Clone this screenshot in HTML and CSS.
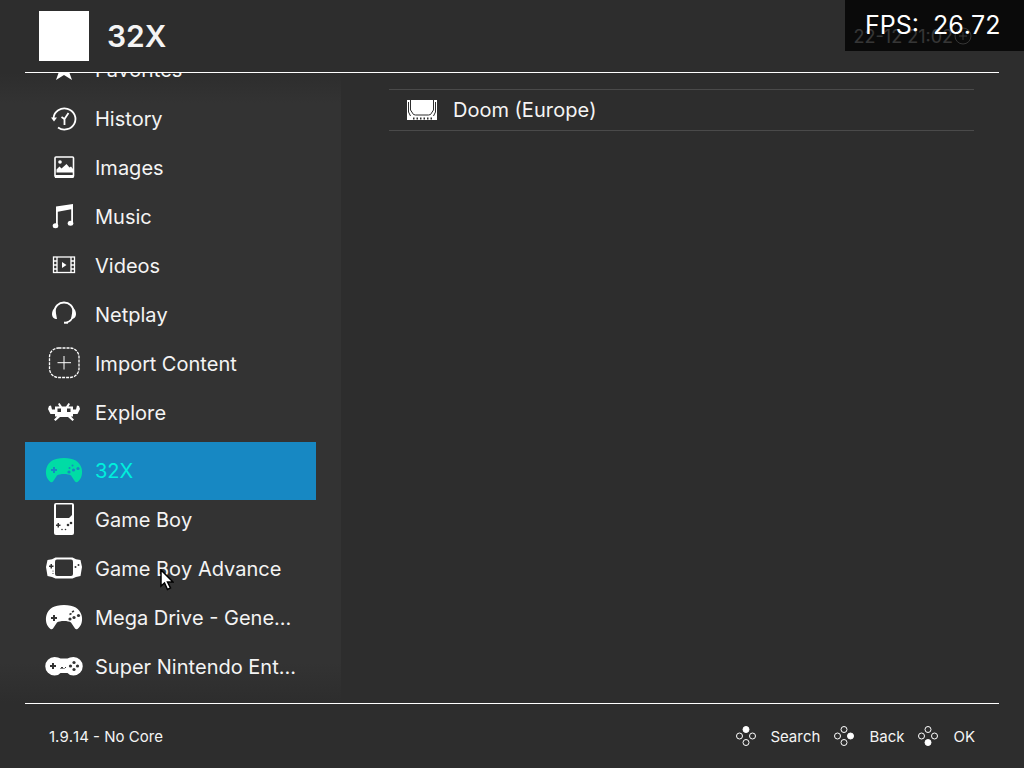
FILE: index.html
```html
<!DOCTYPE html>
<html lang="en">
<head>
  <meta charset="UTF-8">
  <meta name="viewport" content="width=device-width, initial-scale=1.0">
  <title>32X</title>
  <link rel="stylesheet" href="styles.css">
</head>
<body>
  <header class="header">
    <div class="thumb"></div>
    <h1>32X</h1>
    <div class="clock">
      <span>22-12 21:02</span>
      <svg width="20" height="20" viewBox="0 0 20 20" fill="none" stroke="currentColor"><circle cx="10" cy="10" r="8"/><path d="M10 6v8M6 10h8"/></svg>
    </div>
  </header>

  <main class="main">
    <nav class="sidebar">
      <a href="#" class="item">
        <svg class="icon" viewBox="0 0 40 40"><path fill="#fff" d="M20 8l3.500 8.500 9 .5-7 6 2.500 7-8-5-8 5 2.500-7-7-6 9-.5z"/></svg>
        <span>Favorites</span>
      </a>
      <a href="#" class="item">
        <svg class="icon" viewBox="0 0 40 40" fill="none" stroke="#fff" stroke-width="1.800"><path d="M9.500 19A11 10.500 0 1 1 14 28.500"/><path d="M20.500 26v-6l4-6"/><path d="M20.500 20l-3-2"/><path d="M7 18.500h6l-3 4z" fill="#fff" stroke="none"/></svg>
        <span>History</span>
      </a>
      <a href="#" class="item">
        <svg class="icon" viewBox="0 0 40 40"><rect x="11" y="9" width="18.500" height="20" rx="1" fill="none" stroke="#fff" stroke-width="1.600"/><circle cx="16" cy="14" r="1.800" fill="#fff"/><path d="M12.500 24.500v-3l3-3 2 2 5-4.500 3 3.500 1.500-1 2 2.500v3.500zM11 27h18.500v3H11z" fill="#fff"/></svg>
        <span>Images</span>
      </a>
      <a href="#" class="item">
        <svg class="icon" viewBox="0 0 40 40" fill="#fff"><path d="M12 9.500L29 7v19h-1.800V12.300l-13.400 2.500V29H12z"/><ellipse cx="11.500" cy="28.800" rx="2.800" ry="2.500"/><ellipse cx="26.500" cy="26.300" rx="2.800" ry="2.500"/></svg>
        <span>Music</span>
      </a>
      <a href="#" class="item">
        <svg class="icon" viewBox="0 0 40 40" fill="none" stroke="#fff" stroke-width="1.300"><rect x="9.500" y="11" width="21" height="15.500"/><path d="M13 11v15.500M27 11v15.500M9.500 15H13M9.500 19H13M9.500 23H13M27 15h3.500M27 19h3.500M27 23h3.500"/><path d="M18 16l4.500 3-4.500 3z" fill="#fff" stroke="none"/></svg>
        <span>Videos</span>
      </a>
      <a href="#" class="item">
        <svg class="icon" viewBox="0 0 40 40" fill="none" stroke="#fff" stroke-width="2"><path d="M10.500 18C10 4 30 4 29.500 18"/><path d="M29.500 20c-1 4-3 6.500-7 7.500" stroke-width="1.400"/><path d="M11 13l2 11c-3 0-5-2-5-5 0-2.500 1-5 3-6zM29 13l-2 11c3 0 5-2 5-5 0-2.500-1-5-3-6z" fill="#fff" stroke="none"/><path d="M20 27.700h4"/></svg>
        <span>Netplay</span>
      </a>
      <a href="#" class="item">
        <svg class="icon" viewBox="0 0 40 40" fill="none" stroke="#fff"><rect x="5.500" y="4" width="29.500" height="29.500" rx="9" stroke-width="1.300" stroke-dasharray="3 1"/><path d="M20 12v13.500M13.500 18.700H27"/></svg>
        <span>Import Content</span>
      </a>
      <a href="#" class="item">
        <svg class="icon" viewBox="0 0 40 40"><path fill="#fff" d="M5 13l2-.5 1 4h3v-3h4.500L14 11l1.500-1 2.500 3.500h4l2.500-3.500L26 11l-1.500 2.500H29v3h3l1-4 2 .5 1 3-2.500 5H29v2.500h-2l3 3-1.500 1.500-4.500-4h-8l-4.500 4L10 26.500l3-3h-2V21H6.500L4 16z"/><path fill="#333" d="M13.500 15.500H17V19h-3.500zM23 15.500h3.500V19H23z"/></svg>
        <span>Explore</span>
      </a>
      <a href="#" class="item selected">
        <svg class="icon" viewBox="0 0 40 40"><path fill="#00dca5" d="M20 7c10 0 15.500 3.500 17.500 10 1.500 5.500 0 11-4 14-1 .5-2 .3-2.500-.5l-4-6c-2.500-2-11.500-2-14 0l-4 6c-.5.8-1.500 1-2.500.5-4-3-5.500-8.500-4-14C4.500 10.500 10 7 20 7z"/><path fill="#1788c3" d="M9 16h2v2h2v2h-2v2H9v-2H7v-2h2z"/><g fill="#1788c3"><circle cx="25" cy="21" r="1.600"/><circle cx="29.500" cy="19" r="1.600"/><circle cx="34" cy="17.500" r="1.600"/><circle cx="25.500" cy="17" r="1"/><circle cx="28.500" cy="14.500" r="1"/></g></svg>
        <span>32X</span>
      </a>
      <a href="#" class="item">
        <svg class="icon" viewBox="0 0 40 40"><rect x="10" y="3" width="20" height="32" rx="2" fill="#fff"/><path fill="#333" d="M12 4.500h16v10.500l-3 3H12zM13.500 23h1.500v1.500h1.500V26H15v1.500h-1.500V26H12v-1.500h1.500z"/><g fill="#333"><circle cx="24" cy="25" r="1.300"/><circle cx="27" cy="23" r="1.300"/><circle cx="18" cy="29.500" r=".8"/><circle cx="21.500" cy="29.500" r=".8"/></g></svg>
        <span>Game Boy</span>
      </a>
      <a href="#" class="item">
        <svg class="icon" viewBox="0 0 40 40"><path fill="#fff" d="M3.500 11q5-.5 8-2.500h17q3 2 8 2.500l1.500 7-1.500 9q-5 .5-8 2.500h-17q-3-2-8-2.500L2 18z"/><rect x="11" y="10.500" width="18" height="16.500" rx="2" fill="#333"/><path fill="#333" d="M6.500 15H8v1.500h1.500V18H8v1.500H6.500V18H5v-1.500h1.500z"/><g fill="#333"><circle cx="31.500" cy="18" r="1"/><circle cx="34.500" cy="16" r="1"/><circle cx="9" cy="22" r=".6"/><circle cx="9" cy="24.500" r=".6"/></g></svg>
        <span>Game Boy Advance</span>
      </a>
      <a href="#" class="item">
        <svg class="icon" viewBox="0 0 40 40"><path fill="#fff" d="M20 7c10 0 15.500 3.500 17.500 10 1.500 5.500 0 11-4 14-1 .5-2 .3-2.500-.5l-4-6c-2.500-2-11.500-2-14 0l-4 6c-.5.8-1.500 1-2.500.5-4-3-5.500-8.500-4-14C4.500 10.500 10 7 20 7z"/><path fill="#333" d="M9 17h2v2h2v2h-2v2H9v-2H7v-2h2z"/><g fill="#333"><circle cx="26" cy="21" r="1.600"/><circle cx="30" cy="19.500" r="1.600"/><circle cx="34.500" cy="17.500" r="1.600"/></g><path stroke="#333" stroke-width="1.500" d="M25.500 16.500l2-1M28 14l2-1"/></svg>
        <span>Mega Drive - Gene...</span>
      </a>
      <a href="#" class="item">
        <svg class="icon" viewBox="0 0 40 40"><path fill="#fff" d="M10.500 10q4 0 6 1.500h7q2-1.500 6-1.500a9 9 0 0 1 0 18.500q-4 0-6-2.500h-7q-2 2.500-6 2.500a9 9 0 0 1 0-18.500z"/><path fill="#333" d="M8 16h2v2h2v2h-2v2H8v-2H6v-2h2z"/><path stroke="#333" d="M16.500 21.500l1.500-1.500 1.500 1.500M20.500 21.500l1.500-1.500"/><g fill="#333"><circle cx="30" cy="15.500" r="1.600"/><circle cx="30" cy="22.500" r="1.600"/><circle cx="26.500" cy="19" r="1.600"/><circle cx="33.500" cy="19" r="1.600"/></g></svg>
        <span>Super Nintendo Ent...</span>
      </a>
    </nav>

    <section class="content">
      <a href="#" class="entry">
        <svg width="32" height="24" viewBox="0 0 32 24"><path fill="#fff" d="M1 2h30v20H1z"/><path fill="none" stroke="#2d2d2d" d="M4.500 1v11l3 4.500 2 .5h13l2-.5 3-4.500V1M2.500 4v10l2 4M29.500 4v10l-2 4"/><path stroke="#2d2d2d" stroke-width="2" stroke-dasharray="1.500 2" d="M7 20.500h19"/></svg>
        <span>Doom (Europe)</span>
      </a>
    </section>
  </main>

  <footer class="footer">
    <span class="version">1.9.14 - No Core</span>
    <button type="button" class="hint">
      <svg width="22" height="22" viewBox="0 0 22 22" class="pad"><circle cx="11" cy="4.500" r="3" class="on"/><circle cx="4.500" cy="11" r="3"/><circle cx="17.500" cy="11" r="3"/><circle cx="11" cy="17.500" r="3"/></svg>
      Search
    </button>
    <button type="button" class="hint">
      <svg width="22" height="22" viewBox="0 0 22 22" class="pad"><circle cx="11" cy="4.500" r="3"/><circle cx="4.500" cy="11" r="3"/><circle cx="17.500" cy="11" r="3" class="on"/><circle cx="11" cy="17.500" r="3"/></svg>
      Back
    </button>
    <button type="button" class="hint">
      <svg width="22" height="22" viewBox="0 0 22 22" class="pad"><circle cx="11" cy="4.500" r="3"/><circle cx="4.500" cy="11" r="3"/><circle cx="17.500" cy="11" r="3"/><circle cx="11" cy="17.500" r="3" class="on"/></svg>
      OK
    </button>
  </footer>

  <div class="fps">FPS:  26.72</div>

  <svg class="cursor" width="14" height="22" viewBox="0 0 14 22"><path fill="#fff" stroke="#000" stroke-width="1.500" d="M1 1v16l3.500-3 3 6.500 3-1.500-3-6H13z"/></svg>
</body>
</html>
```
FILE: styles.css
```css
* {
  box-sizing: border-box;
}

body {
  margin: 0;
  height: 100vh;
  display: flex;
  flex-direction: column;
  overflow: hidden;
  position: relative;
  background: #2d2d2d;
  color: #f4f4f4;
  font-family: Inter, "Liberation Sans", sans-serif;
  font-size: 20px;
  font-kerning: none;
}

a {
  color: inherit;
  text-decoration: none;
}

svg {
  flex: none;
}

.header {
  display: flex;
  align-items: center;
  height: 73px;
  margin: 0 25px;
  padding: 0 26px 0 14px;
  border-bottom: 1px solid #fff;
}

.thumb {
  width: 50px;
  height: 50px;
  margin-right: 18px;
  background: #fff;
}

h1 {
  margin: 0;
  font-size: 30px;
  font-weight: 600;
}

.clock {
  display: flex;
  align-items: center;
  margin-left: auto;
  font-size: 18px;
}

.main {
  flex: 1;
  min-height: 0;
  display: flex;
}

.sidebar {
  width: 341px;
  display: flex;
  flex-direction: column;
  justify-content: flex-end;
  padding: 0 25px 16px;
  overflow: hidden;
  background: linear-gradient(#2d2d2d, #333 30px, #333 590px, #2d2d2d);
}

.item {
  flex: none;
  display: flex;
  align-items: center;
  gap: 11px;
  height: 40px;
  margin-bottom: 9px;
  padding-left: 19px;
  white-space: nowrap;
}

.item:last-child {
  margin-bottom: 0;
}

.selected {
  height: 58px;
  margin-bottom: 0;
  background: #1788c3;
  color: #00f0dc;
}

.icon {
  width: 40px;
  height: 40px;
}

.content {
  flex: 1;
  padding: 16px 50px 0 48px;
}

.entry {
  display: flex;
  align-items: center;
  gap: 15px;
  height: 42px;
  padding-left: 17px;
  border-top: 1px solid #4a4a4a;
  border-bottom: 1px solid #4a4a4a;
}

.footer {
  display: flex;
  align-items: center;
  height: 65px;
  margin: 0 25px;
  padding: 0 24px;
  border-top: 1px solid #fff;
  font-size: 15px;
}

.version {
  margin-right: auto;
}

.hint {
  display: flex;
  align-items: center;
  gap: 14px;
  margin-left: 13px;
  padding: 0;
  border: none;
  background: none;
  color: inherit;
  font: inherit;
}

.pad {
  fill: none;
  stroke: #fff;
}

.pad .on {
  fill: #fff;
}

.fps {
  position: absolute;
  top: 0;
  right: 0;
  width: 179px;
  height: 51px;
  padding-left: 20px;
  background: rgba(0, 0, 0, 0.78);
  color: #fff;
  font-size: 25px;
  line-height: 51px;
  white-space: pre;
}

.cursor {
  position: absolute;
  left: 160px;
  top: 569px;
}
```
